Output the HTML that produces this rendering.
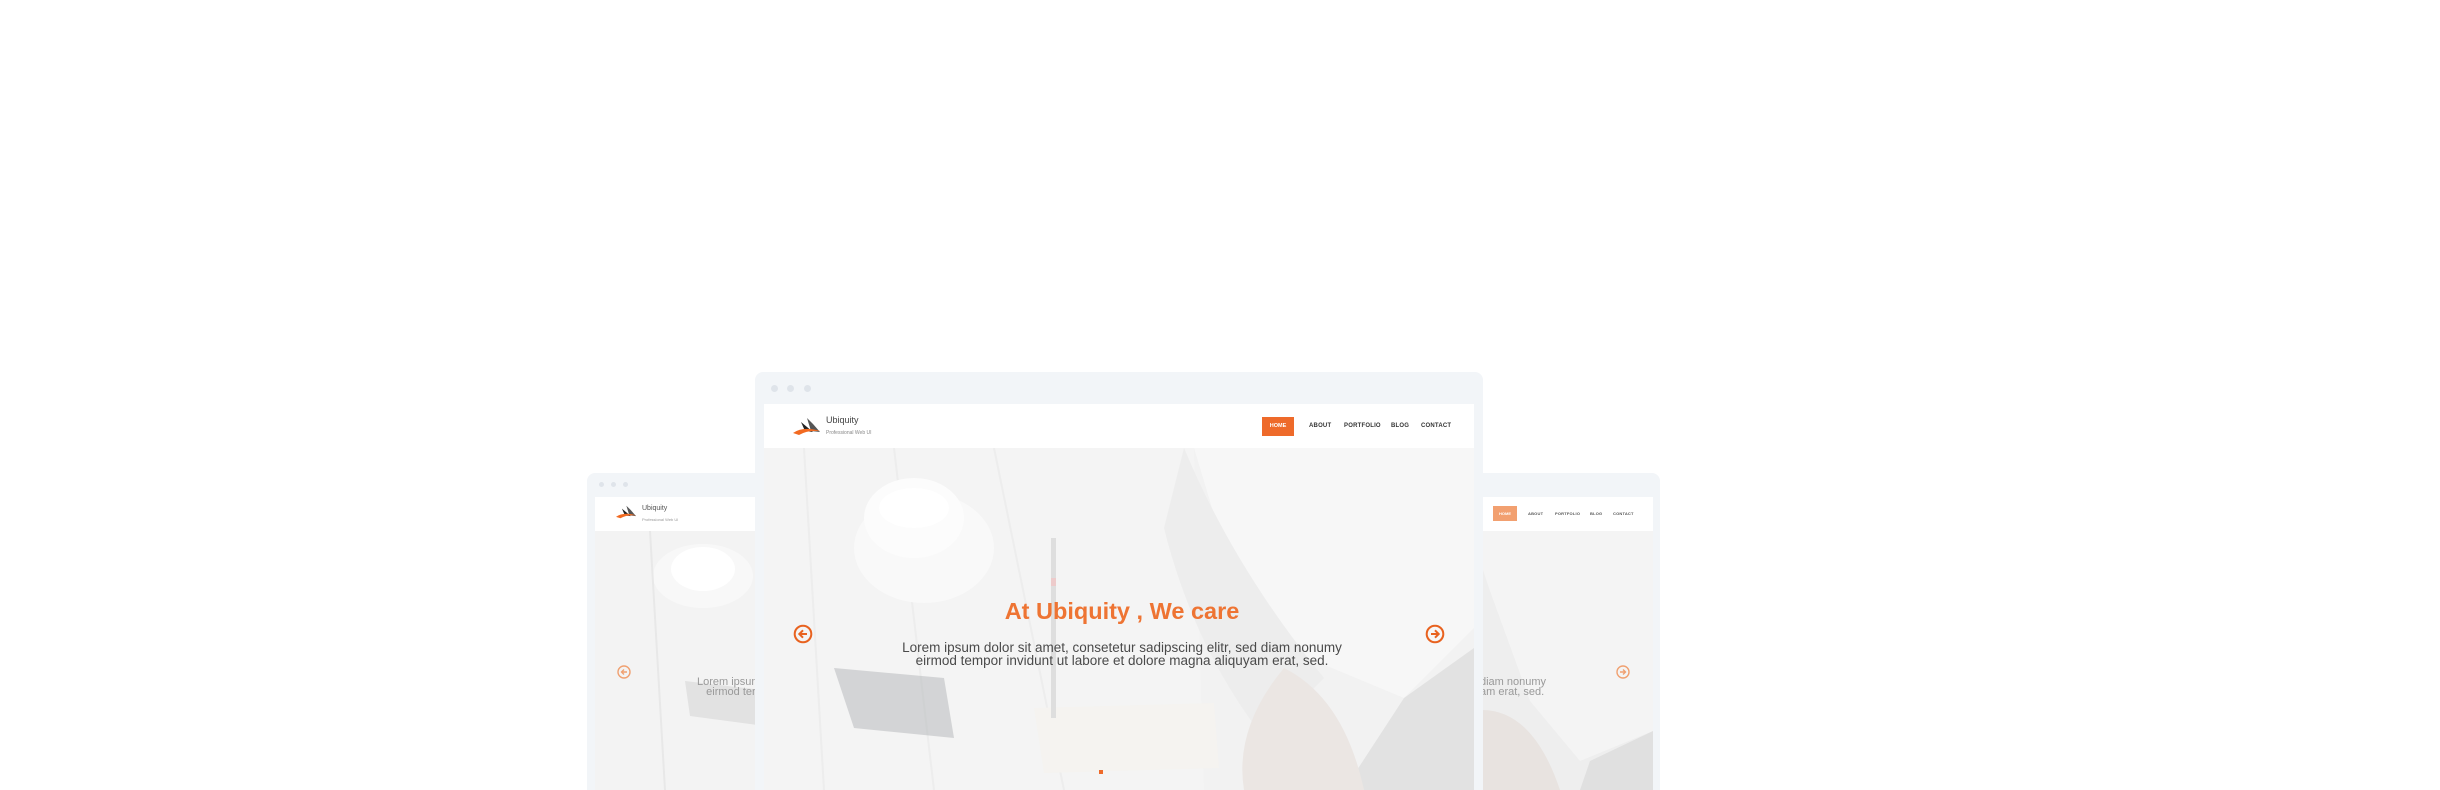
<!DOCTYPE html>
<html style="width:2440px;height:790px;overflow:hidden"><head><meta charset="utf-8"><style>
*{margin:0;padding:0;box-sizing:border-box}
body{width:2440px;height:790px;background:#fff;position:relative;overflow:hidden;font-family:"Liberation Sans",sans-serif}
.frame{position:absolute;background:#f2f5f8;border-radius:8px 8px 0 0}
.dot{position:absolute;width:7px;height:7px;border-radius:50%;background:#dfe4ea}
.hdr{position:absolute;background:#fff}
.hero{position:absolute;overflow:hidden;background:#ececec}
.abs{position:absolute}
.nav{position:absolute;font-size:6px;font-weight:bold;color:#333;letter-spacing:.2px}
.wash{position:absolute;left:0;top:0;width:100%;height:100%;background:rgba(255,255,255,.35)}
</style></head><body>

<!-- left frame -->
<div class="frame" style="left:587px;top:473px;width:200px;height:317px"></div>
<div class="dot" style="left:599px;top:482px;width:5px;height:5px"></div>
<div class="dot" style="left:611px;top:482px;width:5px;height:5px"></div>
<div class="dot" style="left:623px;top:482px;width:5px;height:5px"></div>
<div class="hdr" style="left:595px;top:497px;width:180px;height:34px"></div>
<svg class="abs" style="left:616px;top:505px" width="20" height="14" viewBox="0 0 27 17"><path d="M14 0 L20 6 L27 14 L18 13 Z" fill="#555"/><path d="M8 4 L14 9 L20 14 L12 13 Z" fill="#222"/><path d="M0 15 Q10 8 27 13 Q14 12 6 17 Z" fill="#f26a21"/></svg>
<div class="abs" style="left:642px;top:505px;font-size:7px;color:#555">Ubiquity</div>
<div class="abs" style="left:642px;top:517px;font-size:4px;color:#999">Professional Web UI</div>
<div class="hero" style="left:595px;top:531px;width:180px;height:259px;background:#f3f3f3">
<svg width="180" height="259"><ellipse cx="108" cy="45" rx="50" ry="32" fill="#f8f8f8"/><ellipse cx="108" cy="38" rx="32" ry="22" fill="#fff"/><path d="M90 150 L175 160 L170 195 L95 185Z" fill="#e2e2e2"/><path d="M55 0 L70 259" stroke="#e8e8e8" stroke-width="2"/></svg>
</div>
<svg class="abs" style="left:617px;top:665px" width="14" height="14"><circle cx="7" cy="7" r="6" fill="none" stroke="#f0a070" stroke-width="1.4"/><path d="M10 7H4.5M7 4.5L4.5 7L7 9.5" fill="none" stroke="#f0a070" stroke-width="1.4"/></svg>
<div class="abs" style="left:697px;top:677px;font-size:11px;color:#999;line-height:10px;white-space:nowrap">Lorem ipsum<br>&nbsp;&nbsp;&nbsp;eirmod ter</div>

<!-- right frame -->
<div class="frame" style="left:1460px;top:473px;width:200px;height:317px"></div>
<div class="hdr" style="left:1470px;top:497px;width:183px;height:34px"></div>
<div class="abs" style="left:1493px;top:506px;width:24px;height:15px;background:#f2a070;color:#fff;font-size:4px;font-weight:bold;text-align:center;line-height:15px">HOME</div>
<div class="nav" style="left:1528px;top:511px;font-size:4px;color:#555">ABOUT</div>
<div class="nav" style="left:1555px;top:511px;font-size:4px;color:#555">PORTFOLIO</div>
<div class="nav" style="left:1590px;top:511px;font-size:4px;color:#555">BLOG</div>
<div class="nav" style="left:1613px;top:511px;font-size:4px;color:#555">CONTACT</div>
<div class="hero" style="left:1470px;top:531px;width:183px;height:259px;background:#eeeeee">
<svg width="183" height="259"><path d="M0 0 L183 0 L183 200 L110 230 L60 170 L20 60Z" fill="#f4f4f4"/><path d="M0 180 Q60 170 90 259 L0 259Z" fill="#e8e3e0"/><path d="M120 230 L183 200 L183 259 L110 259Z" fill="#e0e0e0"/></svg>
</div>
<svg class="abs" style="left:1616px;top:665px" width="14" height="14"><circle cx="7" cy="7" r="6" fill="none" stroke="#f0a070" stroke-width="1.4"/><path d="M4 7H9.5M7 4.5L9.5 7L7 9.5" fill="none" stroke="#f0a070" stroke-width="1.4"/></svg>
<div class="abs" style="left:1480px;top:677px;font-size:11px;color:#999;line-height:10px;white-space:nowrap">diam nonumy<br>am erat, sed.</div>

<!-- main frame -->
<div class="frame" style="left:755px;top:372px;width:728px;height:418px"></div>
<div class="dot" style="left:771px;top:385px"></div>
<div class="dot" style="left:787px;top:385px"></div>
<div class="dot" style="left:804px;top:385px"></div>
<div class="hdr" style="left:764px;top:404px;width:710px;height:44px"></div>
<svg class="abs" style="left:793px;top:418px" width="27" height="17" viewBox="0 0 27 17"><path d="M14 0 L20 6 L27 14 L18 13 Z" fill="#555"/><path d="M8 4 L14 9 L20 14 L12 13 Z" fill="#222"/><path d="M0 15 Q10 8 27 13 Q14 12 6 17 Z" fill="#f26a21"/></svg>
<div class="abs" style="left:826px;top:415px;font-size:9px;color:#444">Ubiquity</div>
<div class="abs" style="left:826px;top:430px;font-size:5px;color:#888">Professional Web UI</div>
<div class="abs" style="left:1262px;top:417px;width:32px;height:19px;background:#ee6a2a;color:#fff;font-size:5.5px;font-weight:bold;text-align:center;line-height:19px">HOME</div>
<div class="nav" style="left:1309px;top:423px">ABOUT</div>
<div class="nav" style="left:1344px;top:423px">PORTFOLIO</div>
<div class="nav" style="left:1391px;top:423px">BLOG</div>
<div class="nav" style="left:1421px;top:423px">CONTACT</div>
<div class="hero" style="left:764px;top:448px;width:710px;height:342px;background:#ebebeb">
<svg width="710" height="342">
<path d="M0 0H430L440 342H0Z" fill="#eeeeee"/>
<path d="M40 0 L60 342 M130 0 L170 342 M230 0 L300 342" stroke="#e3e3e3" stroke-width="2"/>
<ellipse cx="160" cy="100" rx="70" ry="55" fill="#f6f6f6"/>
<ellipse cx="150" cy="70" rx="50" ry="40" fill="#fafafa"/>
<ellipse cx="150" cy="60" rx="35" ry="20" fill="#ffffff"/>
<path d="M70 220 L180 230 L190 290 L90 280Z" fill="#8a8d92" opacity=".5"/>
<path d="M430 0 L710 0 L710 180 L640 250 L520 200 L460 100Z" fill="#f3f3f3"/>
<path d="M420 0 Q470 120 560 230 L500 290 Q430 200 400 80Z" fill="#e3e3e3"/>
<path d="M640 250 L710 200 L710 342 L580 342Z" fill="#d3d3d3"/>
<path d="M520 220 Q580 250 600 342 L480 342 Q470 280 520 220Z" fill="#e0d9d5"/>
<path d="M270 260 L450 255 L455 320 L280 325Z" fill="#f0ede8"/>
<rect x="287" y="90" width="5" height="180" fill="#cdcdcd"/>
<rect x="287" y="130" width="5" height="8" fill="#e3b0b0"/>
</svg>
<div class="wash"></div>
</div>
<div class="abs" style="left:864px;top:598px;width:516px;text-align:center;font-size:23.5px;font-weight:bold;color:#ee7433">At Ubiquity , We care</div>
<div class="abs" style="left:844px;top:641px;width:556px;text-align:center;font-size:13.5px;line-height:13px;color:#4a4a4a">Lorem ipsum dolor sit amet, consetetur sadipscing elitr, sed diam nonumy<br>eirmod tempor invidunt ut labore et dolore magna aliquyam erat, sed.</div>
<svg class="abs" style="left:793px;top:624px" width="20" height="20"><circle cx="10" cy="10" r="8.3" fill="none" stroke="#e8621f" stroke-width="2"/><path d="M14 10H6.5M10 6.3L6.3 10L10 13.7" fill="none" stroke="#e8621f" stroke-width="2"/></svg>
<svg class="abs" style="left:1425px;top:624px" width="20" height="20"><circle cx="10" cy="10" r="8.3" fill="none" stroke="#e8621f" stroke-width="2"/><path d="M6 10H13.5M10 6.3L13.7 10L10 13.7" fill="none" stroke="#e8621f" stroke-width="2"/></svg>
<div class="abs" style="left:1099px;top:770px;width:4px;height:4px;background:#ee6a2a"></div>
</body></html>
